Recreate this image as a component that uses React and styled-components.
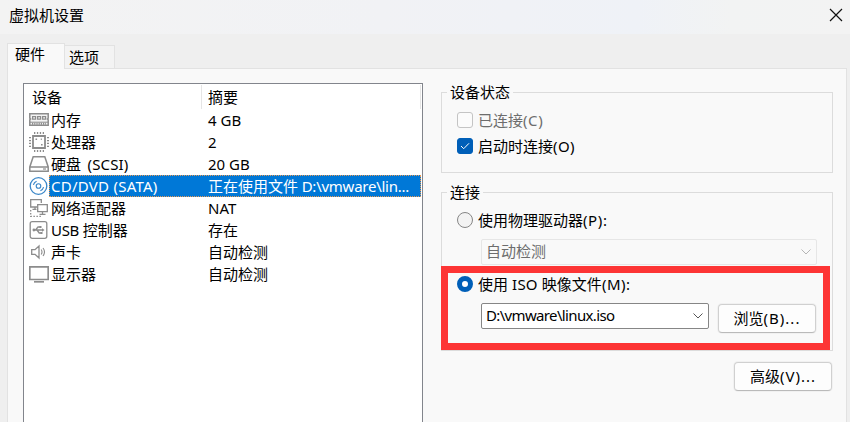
import React from "react";
import styled, { createGlobalStyle } from "styled-components";

const Global = createGlobalStyle`
  * { box-sizing: border-box; }
  body { margin: 0; overflow: hidden; }
`;

const Dialog = styled.div`
  width: 850px;
  height: 422px;
  display: flex;
  flex-direction: column;
  overflow: hidden;
  background: #efefef;
  color: #000;
  font: 15px/22px "Noto Sans", "Noto Sans CJK SC", sans-serif;
  white-space: nowrap;
`;

const TitleBar = styled.header`
  flex: none;
  height: 34px;
  padding: 4px 7px 0 9px;
  display: flex;
  align-items: flex-start;
  justify-content: space-between;
  background: linear-gradient(90deg, #f3f3f3 0%, #f1f2f5 45%, #eff2f7 75%, #f2f3f3 86%, #f3f3f3 100%);
`;

const Close = styled.button`
  width: 14px;
  height: 14px;
  margin-top: 4px;
  padding: 0;
  border: 0;
  background: none;
  display: flex;
`;

const Tabs = styled.nav`
  flex: none;
  height: 34px;
  padding: 9px 0 0 7px;
  display: flex;
  align-items: flex-end;
`;

const Tab = styled.div`
  width: ${(p) => (p.$active ? 58 : 50)}px;
  height: ${(p) => (p.$active ? 26 : 23)}px;
  margin-bottom: ${(p) => (p.$active ? -1 : 0)}px;
  padding-left: ${(p) => (p.$active ? 7 : 4)}px;
  border: 1px solid #e2e2e2;
  border-bottom: 0;
  border-left-width: ${(p) => (p.$active ? 1 : 0)}px;
  background: ${(p) => (p.$active ? "#f9f9f9" : "#f3f3f3")};
  line-height: ${(p) => (p.$active ? 21 : 23)}px;
  z-index: ${(p) => (p.$active ? 1 : 0)};
`;

const Page = styled.main`
  flex: 1;
  margin: 0 3px 0 7px;
  padding: 14px 13px 0 15px;
  border: 1px solid #e2e2e2;
  border-bottom: 0;
  background: #f9f9f9;
  display: flex;
  gap: 18px;
`;

const DeviceList = styled.section`
  flex: none;
  width: 400px;
  border: 1px solid #82858c;
  border-bottom: 0;
  background: #fff;
`;

const ListHead = styled.div`
  height: 25px;
  padding: 1px 1px 0 0;
  display: flex;
`;

const HeadCell = styled.div`
  width: ${(p) => p.$width}px;
  height: 24px;
  padding: 1px 0 0 ${(p) => p.$indent}px;
  border-right: 1px solid #e5e5e5;
`;

const Row = styled.div`
  height: 22px;
  padding: 0 1px 0 5px;
  display: flex;
`;

const IconCell = styled.span`
  width: 20px;
  display: flex;
  align-items: center;
`;

const RowBody = styled.div`
  flex: 1;
  display: flex;
  padding-left: 2px;
  line-height: 22px;
  color: ${(p) => (p.$selected ? "#fff" : "#000")};
  background: ${(p) => (p.$selected ? "#0078d7" : "transparent")};
  outline: ${(p) => (p.$selected ? "1px dotted #e79a55" : "none")};
  outline-offset: -1px;
`;

const Name = styled.span`
  width: 157px;
`;

const Latin = styled.span`
  letter-spacing: ${(p) => p.$track || 0}px;
  margin-left: ${(p) => p.$before || 0}px;
`;

const Settings = styled.section`
  width: 392px;
  padding-top: 9px;
  display: flex;
  flex-direction: column;
`;

const Group = styled.div`
  position: relative;
  height: ${(p) => p.$height}px;
  margin-bottom: ${(p) => p.$after}px;
  border: 1px solid #dcdcdc;
  padding: 0 15px;
`;

const Legend = styled.div`
  width: max-content;
  height: 22px;
  margin: -12px 0 0 -10px;
  padding: 0 3px;
  background: #f9f9f9;
`;

const Option = styled.label`
  height: 22px;
  margin-top: ${(p) => p.$top || 0}px;
  display: flex;
  align-items: center;
  color: ${(p) => (p.$disabled ? "#6d6d6d" : "#000")};
`;

const Check = styled.span`
  width: 16px;
  height: 16px;
  margin-right: 5px;
  border-radius: 3px;
  border: 1px solid ${(p) => (p.$on ? "#005fb8" : "#c4c4c4")};
  background: ${(p) => (p.$on ? "#005fb8" : "#fbfbfb")};
  display: flex;
  align-items: center;
  justify-content: center;
`;

const Radio = styled.span`
  width: 16px;
  height: 16px;
  margin-right: 5px;
  border-radius: 50%;
  border: ${(p) => (p.$on ? "5px solid #005fb8" : "1px solid #868686")};
  background: ${(p) => (p.$on ? "#fff" : "#f3f3f3")};
`;

const Combo = styled.div`
  width: ${(p) => p.$width}px;
  height: 26px;
  padding: 0 5px 0 4px;
  display: flex;
  align-items: center;
  justify-content: space-between;
  border: 1px solid ${(p) => (p.$disabled ? "#e6e6e6" : "#868686")};
  border-radius: 2px;
  background: ${(p) => (p.$disabled ? "#f9f9f9" : "#fff")};
  color: ${(p) => (p.$disabled ? "#6d6d6d" : "#000")};
`;

const ComboText = styled.span`
  padding-bottom: 2px;
  letter-spacing: ${(p) => p.$track || 0}px;
`;

const Indent = styled.div`
  margin: 8px 0 0 24px;
  display: flex;
  align-items: flex-start;
  gap: 9px;
`;

const Button = styled.button`
  width: 98px;
  height: 29px;
  padding: 0 0 1px;
  flex: none;
  margin: 1px ${(p) => p.$inset || 0}px 0 0;
  align-self: flex-end;
  border: 1px solid #d0d0d0;
  border-bottom-color: #bababa;
  border-radius: 4px;
  background: #fdfdfd;
  box-shadow: 0 0 0 1px #f1f1f1;
  color: #000;
  font: inherit;
`;

const Highlight = styled.div`
  position: absolute;
  left: -1px;
  top: 73px;
  width: 389px;
  height: 84px;
  border: 7px solid #fd3535;
  pointer-events: none;
`;

const G = "#8c8c8c";

function DeviceIcon({ kind }) {
  const common = { width: 20, height: 20, viewBox: "0 0 20 20", fill: "none", stroke: G, strokeWidth: 1.3 };
  if (kind === "memory")
    return (
      <svg {...common}>
        <path d="M.8 3.8h18.4v4.4l-.8.8.8.8v5.4H.8V9.8L1.6 9l-.8-.8z" fill="#f4f4f4" strokeWidth="1.5" />
        <path d="M3.6 6.6h3v2.6h-3zM8.6 6.6h3v2.6h-3zM13.6 6.6h3v2.6h-3z" strokeWidth="1.2" />
        <path d="M1 12.2h18" strokeWidth="1" />
        <path d="M3 13.8h14" strokeWidth="2" strokeDasharray="1.2 1" />
      </svg>
    );
  if (kind === "cpu")
    return (
      <svg {...common}>
        <path d="M4 4h12v12H4z" strokeWidth="1.8" />
        <path d="M5 1h10.5M5 19h10.5M1 5v10.5M19 5v10.5" strokeWidth="2" strokeDasharray="1.3 1.6" />
        <path d="M6.5 7.2h1.6M12 12.7h1.6M11.8 7.2h1" strokeWidth="1.6" />
      </svg>
    );
  if (kind === "disk")
    return (
      <svg {...common} strokeWidth="1.5">
        <path d="M4.2 2.7h11.6l3.4 10.2v4.4H.8v-4.4zM.8 12.9h18.4" />
        <path d="M14 15h3" strokeWidth="1.2" />
      </svg>
    );
  if (kind === "disc")
    return (
      <svg {...common} stroke="#3b87c8">
        <circle cx="9.5" cy="10" r="8.3" fill="#fff" />
        <circle cx="9.5" cy="10" r="2.3" strokeWidth="1.1" />
        <path d="M4.4 8.8a5.3 5.3 0 0 1 3.2-3.5M14.6 11.2a5.3 5.3 0 0 1-3.2 3.5" strokeWidth="1.2" />
      </svg>
    );
  if (kind === "network")
    return (
      <svg {...common}>
        <path d="M8 9H1.7V1.7h10.6V5M3.5 11.3h4M6 9v2" />
        <path d="M8.7 6.7h9.6v7H8.7zM13.5 14v2M10.5 16.3h6" />
        <path d="M1.7 12v6.3H12" strokeDasharray="1.5 1.5" />
      </svg>
    );
  if (kind === "usb")
    return (
      <svg {...common}>
        <rect x="1.2" y="1.7" width="16.6" height="16.6" rx="2" />
        <path d="M4 10h10M6.5 10l2.5-3h2M8 10l2.2 3h2" />
        <circle cx="4.9" cy="10" r="1.4" fill={G} stroke="none" />
        <path d="M13 8.2l2.6 1.8-2.6 1.8zM10.5 6h2v2h-2zM11.5 12h2v2h-2z" fill={G} stroke="none" />
      </svg>
    );
  if (kind === "sound")
    return (
      <svg {...common}>
        <path d="M2.7 7.7H6L10 4v12l-4-3.7H2.7z" />
        <path d="M12.2 7.5q1.6 2.5 0 5M14 6q3 4 0 8" strokeWidth="1.1" />
      </svg>
    );
  return (
    <svg {...common} strokeWidth="1.7">
      <path d="M.8 2.8h18.4v12.7H.8z" />
      <path d="M5 17.8h10" />
    </svg>
  );
}

const Chevron = ({ color }) => (
  <svg width="10" height="6" viewBox="0 0 10 6" fill="none" stroke={color}>
    <path d="M.5.5L5 5 9.5.5" />
  </svg>
);

const devices = [
  ["memory", "内存", "4 GB"],
  ["cpu", "处理器", "2"],
  ["disk", <>硬盘<Latin $before={2.5} $track={0.15}> (SCSI)</Latin></>, "20 GB"],
  ["disc", <Latin $track={0.25}>CD/DVD (SATA)</Latin>, <>正在使用文件<Latin $track={-0.25}> D:\vmware\lin...</Latin></>],
  ["network", "网络适配器", "NAT"],
  ["usb", <><Latin $track={-0.3}>USB </Latin>控制器</>, "存在"],
  ["sound", "声卡", "自动检测"],
  ["display", "显示器", "自动检测"],
];

export default function App() {
  return (
    <Dialog>
      <Global />
      <TitleBar>
        <span>虚拟机设置</span>
        <Close aria-label="关闭">
          <svg width="14" height="14" viewBox="0 0 14 14" stroke="#111" strokeWidth="1.2">
            <path d="M1 1l12 12M13 1L1 13" />
          </svg>
        </Close>
      </TitleBar>
      <Tabs>
        <Tab $active>硬件</Tab>
        <Tab>选项</Tab>
      </Tabs>
      <Page>
        <DeviceList>
          <ListHead>
            <HeadCell $width={178} $indent={8}>设备</HeadCell>
            <HeadCell $width={219} $indent={6}>摘要</HeadCell>
          </ListHead>
          {devices.map(([kind, name, summary]) => (
            <Row key={kind}>
              <IconCell><DeviceIcon kind={kind} /></IconCell>
              <RowBody $selected={kind === "disc"}>
                <Name>{name}</Name>
                <span>{summary}</span>
              </RowBody>
            </Row>
          ))}
        </DeviceList>
        <Settings>
          <Group $height={81} $after={19}>
            <Legend>设备状态</Legend>
            <Option $disabled $top={6}><Check />已连接<Latin $track={0.6}>(C)</Latin></Option>
            <Option $top={4}>
              <Check $on>
                <svg width="10" height="8" viewBox="0 0 10 8" fill="none" stroke="#fff">
                  <path d="M1 4l2.7 2.7L9 1.3" />
                </svg>
              </Check>
              启动时连接<Latin $track={0.4}>(O)</Latin>
            </Option>
          </Group>
          <Group $height={159} $after={10}>
            <Legend>连接</Legend>
            <Option $top={6}><Radio />使用物理驱动器<Latin $track={0.6}>(P):</Latin></Option>
            <Indent>
              <Combo $disabled $width={336}><ComboText>自动检测</ComboText><Chevron color="#b5b5b5" /></Combo>
            </Indent>
            <Option $top={8}><Radio $on /><span>使用<Latin $track={0.2}> ISO </Latin>映像文件<Latin $track={0.5}>(M):</Latin></span></Option>
            <Indent>
              <Combo $width={228}><ComboText $track={-0.65}>D:\vmware\linux.iso</ComboText><Chevron color="#555" /></Combo>
              <Button>浏览<Latin $track={1}>(B)...</Latin></Button>
            </Indent>
            <Highlight />
          </Group>
          <Button $inset={1}>高级<Latin $track={1}>(V)...</Latin></Button>
        </Settings>
      </Page>
    </Dialog>
  );
}
